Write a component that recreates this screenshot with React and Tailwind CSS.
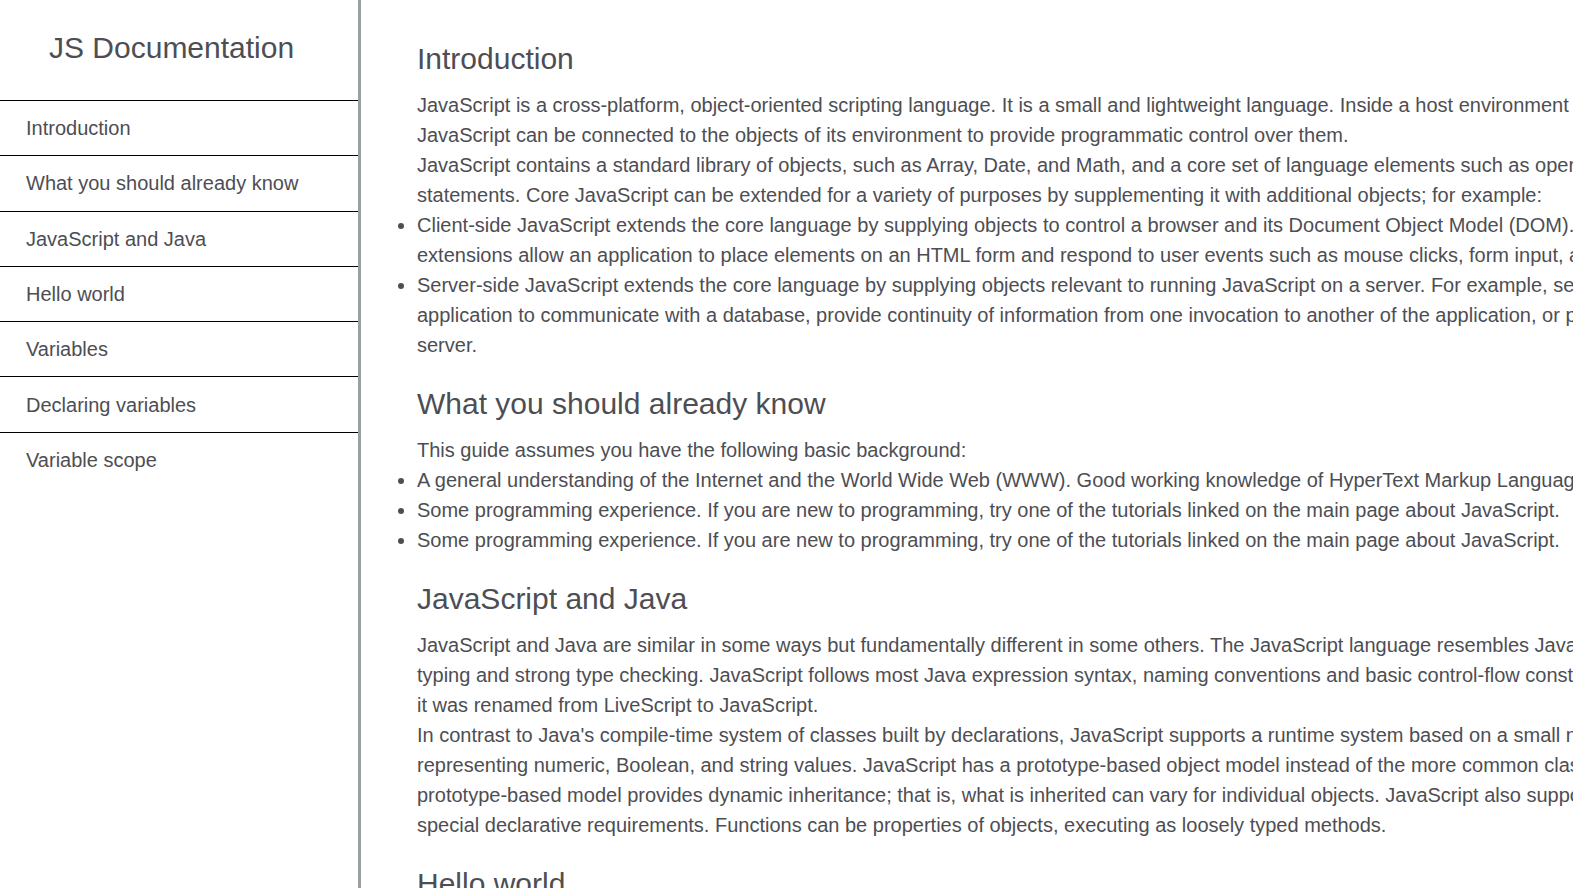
const sections = [
  {
    id: "introduction",
    title: "Introduction",
    paragraphs: [
      "JavaScript is a cross-platform, object-oriented scripting language. It is a small and lightweight language. Inside a host environment (for example, a web browser), JavaScript can be connected to the objects of its environment to provide programmatic control over them.",
      "JavaScript contains a standard library of objects, such as Array, Date, and Math, and a core set of language elements such as operators, control structures, and statements. Core JavaScript can be extended for a variety of purposes by supplementing it with additional objects; for example:",
    ],
    items: [
      "Client-side JavaScript extends the core language by supplying objects to control a browser and its Document Object Model (DOM). For example, client-side extensions allow an application to place elements on an HTML form and respond to user events such as mouse clicks, form input, and page navigation.",
      "Server-side JavaScript extends the core language by supplying objects relevant to running JavaScript on a server. For example, server-side extensions allow an application to communicate with a database, provide continuity of information from one invocation to another of the application, or perform file manipulations on a server.",
    ],
  },
  {
    id: "what-you-should-already-know",
    title: "What you should already know",
    paragraphs: ["This guide assumes you have the following basic background:"],
    items: [
      "A general understanding of the Internet and the World Wide Web (WWW). Good working knowledge of HyperText Markup Language (HTML).",
      "Some programming experience. If you are new to programming, try one of the tutorials linked on the main page about JavaScript.",
      "Some programming experience. If you are new to programming, try one of the tutorials linked on the main page about JavaScript.",
    ],
  },
  {
    id: "javascript-and-java",
    title: "JavaScript and Java",
    paragraphs: [
      "JavaScript and Java are similar in some ways but fundamentally different in some others. The JavaScript language resembles Java but does not have Java's static typing and strong type checking. JavaScript follows most Java expression syntax, naming conventions and basic control-flow constructs which was the reason why it was renamed from LiveScript to JavaScript.",
      "In contrast to Java's compile-time system of classes built by declarations, JavaScript supports a runtime system based on a small number of data types representing numeric, Boolean, and string values. JavaScript has a prototype-based object model instead of the more common class-based object model. The prototype-based model provides dynamic inheritance; that is, what is inherited can vary for individual objects. JavaScript also supports functions without any special declarative requirements. Functions can be properties of objects, executing as loosely typed methods.",
    ],
    items: [],
  },
  { id: "hello-world", title: "Hello world", paragraphs: [], items: [] },
];

const links = [
  ["introduction", "Introduction"],
  ["what-you-should-already-know", "What you should already know"],
  ["javascript-and-java", "JavaScript and Java"],
  ["hello-world", "Hello world"],
  ["variables", "Variables"],
  ["declaring-variables", "Declaring variables"],
  ["variable-scope", "Variable scope"],
];

function Sidebar() {
  return (
    <nav
      aria-label="Documentation"
      className="sticky top-0 h-screen w-[361px] shrink-0 border-r-[3px] border-[#999fa1]"
    >
      <h1 className="h-[100px] pt-[25px] pl-[49px] text-[30px] leading-[45px]">JS Documentation</h1>
      <ul className="grid h-[387px] grid-rows-7">
        {links.map(([id, label]) => (
          <li key={id} className="border-t border-black">
            <a href={"#" + id} className="flex h-full items-center pl-[26px]">
              {label}
            </a>
          </li>
        ))}
      </ul>
    </nav>
  );
}

function Section({ id, title, paragraphs, items }) {
  return (
    <section id={id}>
      <h2 className="mb-[9px] text-[30px] leading-[45px]">{title}</h2>
      {paragraphs.map((text) => (
        <p key={text}>{text}</p>
      ))}
      <ul className="list-disc">
        {items.map((text, i) => (
          <li key={i}>{text}</li>
        ))}
      </ul>
    </section>
  );
}

export default function App() {
  return (
    <div className="flex min-h-screen bg-white font-['Liberation_Sans',Arial,sans-serif] text-[20px] leading-[30px] text-[#4d4e53]">
      <Sidebar />
      <main className="min-w-0 flex-1 overflow-x-hidden pt-[36px] pl-[56px]">
        <div className="flex w-[1440px] flex-col gap-[21px]">
          {sections.map((section) => (
            <Section key={section.id} {...section} />
          ))}
        </div>
      </main>
    </div>
  );
}
